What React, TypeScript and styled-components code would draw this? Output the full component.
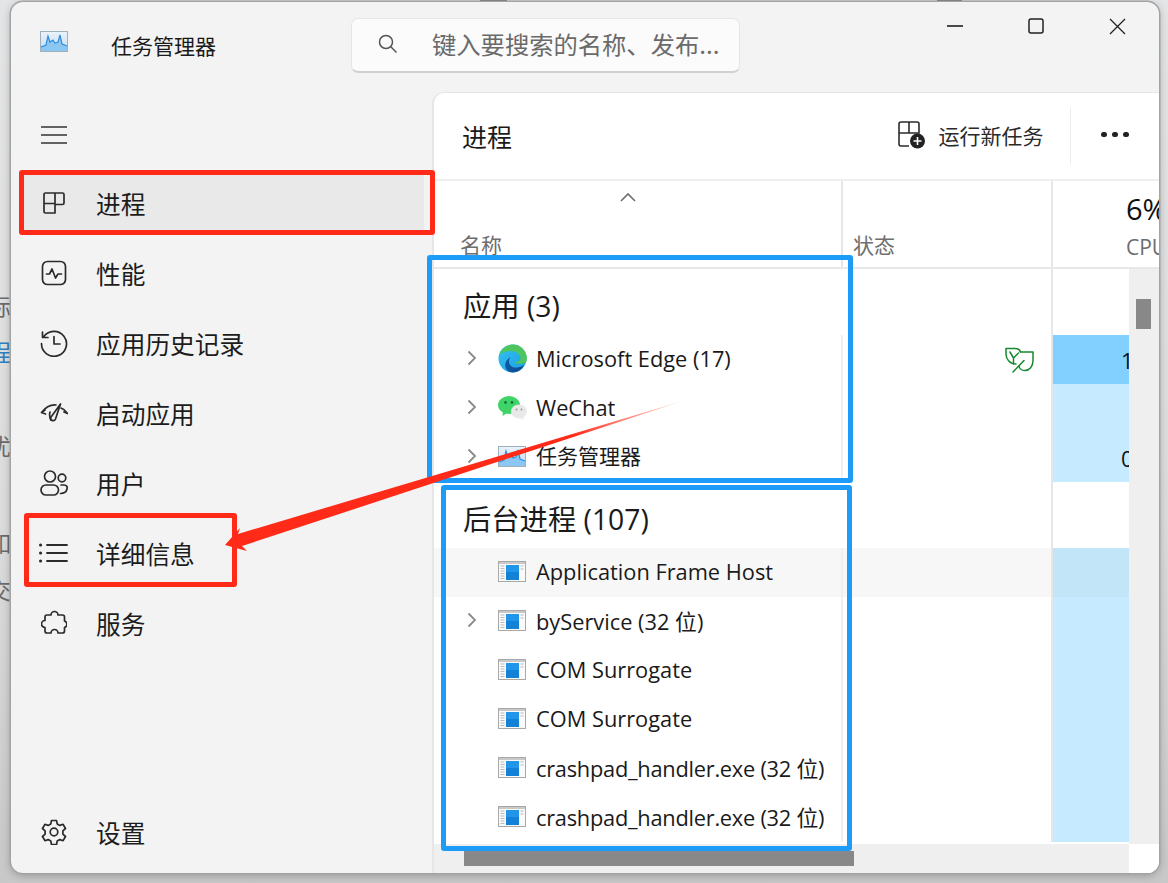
import React from "react";
import styled, { createGlobalStyle } from "styled-components";

const CJK = `"Noto Sans CJK SC", sans-serif`;
const LATIN = `"Open Sans", "Noto Sans CJK SC", sans-serif`;

const Global = createGlobalStyle`
  html, body { margin: 0; padding: 0; }
  body { width: 1168px; height: 883px; overflow: hidden; background: #d6d6d6; font-family: ${CJK}; }
  * { box-sizing: border-box; }
`;

const Desktop = styled.div`
  position: relative;
  width: 1168px;
  height: 883px;
  padding: 2px 9px 10px 11px;
  background: linear-gradient(#e4e5e6, #dcdcdc 60%, #c8c8c8);
  overflow: hidden;
`;

const BackText = styled.span<{ $top: number; $blue?: boolean }>`
  position: absolute;
  left: -12px;
  top: ${(p) => p.$top}px;
  font-size: 23px;
  line-height: 24px;
  color: ${(p) => (p.$blue ? "#2f7fc1" : "#6b6b6b")};
`;

const BackTab = styled.div<{ $x: number; $w: number }>`
  position: absolute;
  left: ${(p) => p.$x}px;
  top: 0;
  width: ${(p) => p.$w}px;
  height: 3px;
  background: #666;
`;

const Win = styled.div`
  position: relative;
  width: 1148px;
  height: 871px;
  display: flex;
  flex-direction: column;
  background: #f3f3f3;
  border-radius: 12px;
  box-shadow: 0 0 0 1.5px #a4a4a4, 0 2px 10px rgba(0, 0, 0, 0.28);
  overflow: hidden;
`;

const TitleBar = styled.div`
  height: 90px;
  flex: none;
  display: flex;
  align-items: flex-start;
`;

const AppIcon = styled.div`
  width: 100px;
  padding: 29px 0 0 29px;
  flex: none;
`;

const AppTitle = styled.div`
  width: 240px;
  flex: none;
  padding-top: 27px;
  font-size: 21px;
  line-height: 32px;
  color: #1a1a1a;
`;

const Search = styled.div`
  width: 389px;
  height: 55px;
  margin-top: 16px;
  flex: none;
  display: flex;
  align-items: center;
  padding: 0 0 3px 26px;
  gap: 34px;
  background: #fbfbfb;
  border: 1px solid #e6e6e6;
  border-bottom: 2px solid #d0d0d0;
  border-radius: 7px;
  font-size: 24.3px;
  color: #6a6a6a;
  white-space: nowrap;
`;

const WinButtons = styled.div`
  margin-left: auto;
  display: flex;
  align-items: center;
  height: 48px;
  padding-right: 33px;
  gap: 65px;
`;

const Body = styled.div`
  flex: 1;
  min-height: 0;
  display: flex;
`;

const Sidebar = styled.nav`
  width: 421px;
  flex: none;
  display: flex;
  flex-direction: column;
`;

const Burger = styled.div`
  height: 76px;
  flex: none;
  padding: 33px 0 0 30px;
`;

const NavItem = styled.div<{ $active?: boolean }>`
  height: 70px;
  flex: none;
  display: flex;
  align-items: center;
  margin: 0 8px 0 8px;
  padding-left: 20px;
  gap: 27px;
  font-size: 24.7px;
  color: #1c1c1c;
  background: ${(p) => (p.$active ? "#e9e9e9" : "transparent")};
  background-clip: padding-box;
  border-top: 5px solid transparent;
  border-bottom: 5px solid transparent;
`;

const NavIconBox = styled.span`
  width: 30px;
  height: 30px;
  flex: none;
  display: flex;
  align-items: center;
  justify-content: center;
`;

const Spacer = styled.div`
  flex: 1;
`;

const NavFoot = styled(NavItem)`
  margin-bottom: 6px;
`;

const Panel = styled.main`
  position: relative;
  flex: 1;
  min-width: 0;
  display: flex;
  flex-direction: column;
  background: #fff;
  border-top: 1px solid #e6e6e6;
  border-left: 2px solid #e6e6e6;
  border-top-left-radius: 12px;
  overflow: hidden;
`;

const Toolbar = styled.div`
  height: 88px;
  flex: none;
  display: flex;
  align-items: center;
  padding-left: 28px;
  border-bottom: 2.5px solid #efefef;
`;

const PageTitle = styled.div`
  font-size: 25px;
  color: #1a1a1a;
  flex: 1;
`;

const ToolAction = styled.div`
  display: flex;
  align-items: center;
  gap: 13px;
  font-size: 21px;
  color: #2a2a2a;
  padding: 0 26px 3px 0;
`;

const ToolDivider = styled.div`
  width: 1.5px;
  height: 56px;
  background: #ececec;
`;

const More = styled.div`
  width: 88px;
  flex: none;
  display: flex;
  justify-content: center;
  gap: 5.5px;
  padding-bottom: 3px;
`;

const Dot = styled.i`
  width: 5.5px;
  height: 5.5px;
  border-radius: 50%;
  background: #222;
`;

const Grid = styled.div`
  flex: 1;
  min-height: 0;
  display: flex;
  flex-direction: column;
`;

const HeadRow = styled.div`
  height: 88px;
  flex: none;
  display: grid;
  grid-template-columns: 409px 210px 1fr;
  border-bottom: 2px solid #e8e8e8;
`;

const HeadCell = styled.div<{ $right?: boolean }>`
  position: relative;
  display: flex;
  flex-direction: column;
  justify-content: flex-end;
  padding: 0 0 9px ${(p) => (p.$right ? "10px" : "26px")};
  font-size: 21px;
  line-height: 28px;
  color: #6e6e6e;
  border-right: 2px solid #e6e6e6;
  white-space: nowrap;
  overflow: hidden;
  &:last-child { border-right: none; padding-left: 73px; padding-bottom: 7px; }
`;

const SortCaret = styled.svg`
  position: absolute;
  left: 186px;
  top: 11px;
`;

const CpuPct = styled.span`
  font-family: ${LATIN};
  font-size: 29px;
  line-height: 36px;
  margin-bottom: 7px;
  color: #111;
`;

const CpuLabel = styled.span`
  font-family: ${LATIN};
  font-size: 21px;
  line-height: 26px;
  color: #6e6e6e;
`;

const ScrollArea = styled.div`
  flex: 1;
  min-height: 0;
  display: grid;
  grid-template-columns: 1fr 30px;
  grid-template-rows: 1fr 29px;
`;

const RowsClip = styled.div`
  overflow: hidden;
  min-width: 0;
`;

const GroupRow = styled.div`
  height: 66px;
  display: grid;
  grid-template-columns: 409px 210px 1fr;
`;

const GroupTitle = styled.div<{ $pad: number }>`
  padding: ${(p) => p.$pad}px 0 0 29px;
  font-family: ${LATIN};
  font-size: 28.3px;
  line-height: 36px;
  color: #1a1a1a;
  white-space: nowrap;
`;

const BlankCell = styled.div`
  border-right: 2px solid #e6e6e6;
  &:last-child { border-right: none; }
`;

const Row = styled.div<{ $hover?: boolean }>`
  height: 49px;
  display: grid;
  grid-template-columns: 409px 210px 1fr;
  background: ${(p) => (p.$hover ? "#f7f7f7" : "#fff")};
`;

const NameCell = styled.div<{ $tight?: boolean }>`
  display: flex;
  align-items: center;
  padding: 0 0 2px 33px;
  font-family: ${LATIN};
  font-size: 21.8px;
  letter-spacing: ${(p) => (p.$tight ? "-0.25px" : "0")};
  color: #1a1a1a;
  white-space: nowrap;
  border-right: 2px solid #f0f0f0;
`;

const CjkName = styled.span`
  font-family: ${CJK};
  font-size: 21px;
  line-height: 28px;
  padding-bottom: 4px;
`;

const Chevron = styled.span`
  width: 31px;
  flex: none;
  display: flex;
  align-items: center;
  padding-bottom: 2px;
`;

const ProcIconBox = styled.span`
  width: 38px;
  flex: none;
  display: flex;
  align-items: center;
`;

const StatusCell = styled.div`
  display: flex;
  align-items: center;
  justify-content: flex-end;
  padding-right: 17px;
  border-right: 2px solid #e6e6e6;
`;

const CpuCell = styled.div<{ $level: 0 | 1 | 2 | 3 }>`
  display: flex;
  align-items: center;
  padding-left: 68px;
  font-family: ${LATIN};
  font-size: 22px;
  color: #111;
  overflow: hidden;
  background: ${(p) =>
    p.$level === 2 ? "#81d0ff" : p.$level === 1 ? "#c6eaff" : p.$level === 3 ? "#c3e5f8" : "transparent"};
`;

const VTrack = styled.div`
  background: #efefef;
  padding: 30px 8px 0 7px;
`;

const VThumb = styled.div`
  height: 30px;
  background: #888;
`;

const HTrack = styled.div`
  background: #efefef;
  padding: 7px 0 0 30px;
`;

const HThumb = styled.div`
  width: 390px;
  height: 15px;
  background: #888;
`;

const Corner = styled.div`
  background: #fff;
`;

const Mark = styled.div<{ $c: string; $x: number; $y: number; $w: number; $h: number }>`
  position: absolute;
  left: ${(p) => p.$x}px;
  top: ${(p) => p.$y}px;
  width: ${(p) => p.$w}px;
  height: ${(p) => p.$h}px;
  border: 5px solid ${(p) => p.$c};
  border-radius: 3px;
  pointer-events: none;
`;

const ArrowLayer = styled.svg`
  position: absolute;
  left: 0;
  top: 0;
  pointer-events: none;
`;

const Ic = { fill: "none", stroke: "#2b2b2b", strokeWidth: 1.7, strokeLinecap: "round", strokeLinejoin: "round" } as const;

const TaskIcon = () => (
  <svg width="28" height="21" viewBox="0 0 28 21">
    <defs>
      <linearGradient id="tm" x1="0" y1="0" x2="0" y2="1">
        <stop offset="0" stopColor="#eaf3fb" />
        <stop offset="1" stopColor="#c3dcf0" />
      </linearGradient>
    </defs>
    <rect x="0.5" y="0.5" width="27" height="20" fill="url(#tm)" stroke="#9fb0bd" />
    <path d="M1 16 L6 14 L8 5 L10 11 L13 9 L15 12 L18 11 L20 4 L22 13 L27 15 L27 20 L1 20 Z" fill="#8cc6f2" />
    <path d="M1 16 L6 14 L8 5 L10 11 L13 9 L15 12 L18 11 L20 4 L22 13 L27 15" fill="none" stroke="#2f8fdc" strokeWidth="1.2" />
  </svg>
);

const ProcIcon = () => (
  <svg width="28" height="21" viewBox="0 0 28 21">
    <rect x="0.5" y="0.5" width="27" height="20" fill="#fafafa" stroke="#a8a8a8" />
    <rect x="1" y="1" width="26" height="2" fill="#c9c9c9" />
    <path d="M2.5 5h4M2.5 7.5h4M2.5 10h4M2.5 12.5h4M2.5 15h4M2.5 17.5h4M22.5 5h3M22.5 8h3" stroke="#b9b9b9" strokeWidth="1" />
    <rect x="8" y="4" width="13" height="15" fill="#1281d6" />
    <rect x="8" y="4" width="13" height="7" fill="#2196e8" />
  </svg>
);

const EdgeIcon = () => (
  <svg width="29" height="29" viewBox="0 0 29 29">
    <defs>
      <linearGradient id="e1" x1="0" y1="0" x2="1" y2="1">
        <stop offset="0" stopColor="#35c1f1" />
        <stop offset="1" stopColor="#1b9de2" />
      </linearGradient>
      <linearGradient id="e2" x1="0" y1="0" x2="1" y2="0">
        <stop offset="0" stopColor="#0c59a4" />
        <stop offset="1" stopColor="#114a8b" />
      </linearGradient>
    </defs>
    <circle cx="14.5" cy="14.5" r="14" fill="url(#e1)" />
    <path d="M15 .6a14 14 0 0 1 13.900 14.600c0 3.400-3.400 4.800-6.400 4.800-3 0-5.400-.9-6.400-1.900 4.400.1 6.400-1.500 6.400-3.900C22.500 9.500 16.500 7 13 7 9 7 3.500 8.500 1.200 11 3 5 8.500.6 15 .6Z" fill="#4ec55f" />
    <path d="M26 21c-2 4.800-6.900 7.500-11.500 7.500-3 0-5.200-1.400-6.500-4-2-4 0-9.600 4.500-11-1.500 1.700-2 3.600-1.200 6 1.100 3.100 4.400 4.300 7.500 4.100 2.800-.2 5.300-1.100 7.200-2.600Z" fill="url(#e2)" />
  </svg>
);

const WeChatIcon = () => (
  <svg width="29" height="24" viewBox="0 0 29 24">
    <ellipse cx="11" cy="9" rx="11" ry="9" fill="#3fd467" />
    <path d="M5 15 L4.5 20 L10 16.5 Z" fill="#3fd467" />
    <circle cx="7.5" cy="6.5" r="1.4" fill="#14783a" />
    <circle cx="14" cy="6.5" r="1.4" fill="#14783a" />
    <ellipse cx="21" cy="15.5" rx="8" ry="7" fill="#e9e9e9" />
    <path d="M24 20 L26 24 L21 21.5 Z" fill="#e9e9e9" />
    <circle cx="18.5" cy="13.5" r="1" fill="#9b9b9b" />
    <circle cx="23.5" cy="13.5" r="1" fill="#9b9b9b" />
  </svg>
);

const Chev = () => (
  <svg width="10" height="16" viewBox="0 0 10 16">
    <path d="M1.500 1.500 L8 8 L1.500 14.500" fill="none" stroke="#8a8a8a" strokeWidth="1.800" />
  </svg>
);

const Leaf = () => (
  <svg width="29" height="26" viewBox="0 0 29 26" fill="none" stroke="#17882f" strokeWidth="1.500" strokeLinecap="round" strokeLinejoin="round">
    <path d="M11 17C5 17 1 12.500 1 7V1.500h9c3 0 5 1.500 5.500 3.500" />
    <path d="M15.500 5H28v8.500c0 6-3.500 10-8 10-3 0-5.500-1.500-6-4.500" />
    <path d="M5 5l3.500 6 5-5M8.500 11v6" />
    <path d="M8 25 19 13.500" />
  </svg>
);

const navIcons: Record<string, React.ReactNode> = {
  proc: (
    <svg width="24" height="24" viewBox="0 0 24 24" {...Ic}>
      <path d="M2 3.500A1.500 1.500 0 0 1 3.500 2h17A1.500 1.500 0 0 1 22 3.500V12a1.500 1.500 0 0 1-1.500 1.500H13V22H3.500A1.500 1.500 0 0 1 2 20.500ZM13 2v11.500M2 12.500h11" />
    </svg>
  ),
  perf: (
    <svg width="26" height="26" viewBox="0 0 26 26" {...Ic}>
      <rect x="1.500" y="1.500" width="23" height="23" rx="5" />
      <path d="M5.500 14h3l2.500-5 3.500 9 2.500-4h3.500" />
    </svg>
  ),
  hist: (
    <svg width="28" height="28" viewBox="0 0 28 28" {...Ic}>
      <path d="M3.500 8A12.500 12.500 0 1 1 1.500 14.500M2.500 3v5.500H8M14 7.500v7.500h6" />
    </svg>
  ),
  start: (
    <svg width="28" height="22" viewBox="0 0 28 22" {...Ic}>
      <path d="M1.500 10.500C5 6 10 2.500 16 3M1.500 10.500 5 8M1.500 10.500l4 1.500" />
      <path d="M20.500 2 15.500 17a2.600 2.600 0 0 1-5-1.200Z" />
      <path d="M11 18c-1.500-3-2-5-1-8M21 6c3 1 5 3 6.500 5.500M27.500 11.500 24 10" />
    </svg>
  ),
  user: (
    <svg width="28" height="26" viewBox="0 0 28 26" {...Ic}>
      <circle cx="10" cy="6.500" r="5.500" />
      <circle cx="22" cy="8" r="3.800" />
      <rect x="1" y="15" width="17.500" height="10" rx="5" />
      <path d="M21 15h3c3 0 3.500 2 3 4-.7 3-3.500 4.500-6.500 4.500" />
    </svg>
  ),
  list: (
    <svg width="30" height="20" viewBox="0 0 30 20" fill="none" stroke="#2b2b2b" strokeWidth="1.800" strokeLinecap="round">
      <path d="M8 2h20M8 10h20M8 18h20" />
      <path d="M1.500 2h.1M1.500 10h.1M1.500 18h.1" strokeWidth="3" />
    </svg>
  ),
  svc: (
    <svg width="26" height="28" viewBox="0 0 26 28" {...Ic}>
      <path d="M10 6a3.500 3.500 0 1 1 7 0h4.500a2 2 0 0 1 2 2v4a3.400 3.400 0 0 1 0 6.500v3.500a2 2 0 0 1-2 2H17a3.500 3.500 0 0 0-7 0H6a2 2 0 0 1-2-2v-3.500a3.500 3.500 0 0 1 0-7V8a2 2 0 0 1 2-2h4Z" />
    </svg>
  ),
  gear: (
    <svg width="26" height="26" viewBox="0 0 26 26" {...Ic}>
      <circle cx="13" cy="13" r="3.800" />
      <path d="M10.500 1.500h5l.7 3.400 2.600 1.500 3.300-1.100 2.400 4.200-2.600 2.300v3.400l2.600 2.300-2.400 4.200-3.300-1.100-2.600 1.500-.7 3.400h-5l-.7-3.400-2.600-1.500-3.300 1.100-2.400-4.200 2.600-2.300v-3.400L1.500 9.500l2.400-4.200 3.300 1.100 2.600-1.500Z" />
    </svg>
  ),
};

const nav: [string, string][] = [
  ["proc", "进程"],
  ["perf", "性能"],
  ["hist", "应用历史记录"],
  ["start", "启动应用"],
  ["user", "用户"],
  ["list", "详细信息"],
  ["svc", "服务"],
];

const bgRows: [string, boolean, boolean, boolean][] = [
  ["Application Frame Host", false, true, false],
  ["byService (32 位)", true, false, false],
  ["COM Surrogate", false, false, false],
  ["COM Surrogate", false, false, false],
  ["crashpad_handler.exe (32 位)", false, false, true],
  ["crashpad_handler.exe (32 位)", false, false, true],
];

export default function App() {
  return (
    <Desktop>
      <Global />
      <BackTab $x={480} $w={27} />
      <BackTab $x={937} $w={25} />
      <BackText $top={293}>标</BackText>
      <BackText $top={339} $blue>程</BackText>
      <BackText $top={433}>优</BackText>
      <BackText $top={530}>如</BackText>
      <BackText $top={577}>交</BackText>
      <Win>
        <TitleBar>
          <AppIcon><TaskIcon /></AppIcon>
          <AppTitle>任务管理器</AppTitle>
          <Search>
            <svg width="20" height="20" viewBox="0 0 20 20" fill="none" stroke="#555" strokeWidth="1.500">
              <circle cx="8" cy="8" r="6.500" />
              <path d="M12.800 12.800 18.500 18.500" />
            </svg>
            键入要搜索的名称、发布...
          </Search>
          <WinButtons>
            <svg width="16" height="2" viewBox="0 0 16 2"><path d="M0 1h16" stroke="#111" strokeWidth="1.500" /></svg>
            <svg width="16" height="16" viewBox="0 0 16 16" fill="none" stroke="#222" strokeWidth="1.500"><rect x="1" y="1" width="14" height="14" rx="2" /></svg>
            <svg width="17" height="17" viewBox="0 0 17 17" fill="none" stroke="#222" strokeWidth="1.300"><path d="M1 1 16 16M16 1 1 16" /></svg>
          </WinButtons>
        </TitleBar>
        <Body>
          <Sidebar>
            <Burger>
              <svg width="26" height="18" viewBox="0 0 26 18" fill="none" stroke="#333" strokeWidth="1.600"><path d="M0 1h26M0 9h26M0 17h26" /></svg>
            </Burger>
            {nav.map(([k, t], i) => (
              <NavItem key={k} $active={i === 0}>
                <NavIconBox>{navIcons[k]}</NavIconBox>
                {t}
              </NavItem>
            ))}
            <Spacer />
            <NavFoot>
              <NavIconBox>{navIcons.gear}</NavIconBox>
              设置
            </NavFoot>
          </Sidebar>
          <Panel>
            <Toolbar>
              <PageTitle>进程</PageTitle>
              <ToolAction>
                <svg width="28" height="28" viewBox="0 0 28 28" fill="none" stroke="#2b2b2b" strokeWidth="1.600">
                  <path d="M11 25H3a2 2 0 0 1-2-2V3a2 2 0 0 1 2-2h16a2 2 0 0 1 2 2v9H1M11 1v11" />
                  <circle cx="19.500" cy="20" r="7.500" fill="#222" stroke="none" />
                  <path d="M19.500 16v8M15.500 20h8" stroke="#fff" />
                </svg>
                运行新任务
              </ToolAction>
              <ToolDivider />
              <More><Dot /><Dot /><Dot /></More>
            </Toolbar>
            <Grid>
              <HeadRow>
                <HeadCell>
                  <SortCaret width="16" height="10" viewBox="0 0 16 10"><path d="M1 9 8 2l7 7" fill="none" stroke="#6f6f6f" strokeWidth="1.600" /></SortCaret>
                  名称
                </HeadCell>
                <HeadCell $right>状态</HeadCell>
                <HeadCell>
                  <CpuPct>6%</CpuPct>
                  <CpuLabel>CPU</CpuLabel>
                </HeadCell>
              </HeadRow>
              <ScrollArea>
                <RowsClip>
                  <GroupRow>
                    <GroupTitle $pad={19}>应用 (3)</GroupTitle>
                    <BlankCell />
                    <BlankCell />
                  </GroupRow>
                  <Row>
                    <NameCell><Chevron><Chev /></Chevron><ProcIconBox><EdgeIcon /></ProcIconBox>Microsoft Edge (17)</NameCell>
                    <StatusCell><Leaf /></StatusCell>
                    <CpuCell $level={2}>1</CpuCell>
                  </Row>
                  <Row>
                    <NameCell><Chevron><Chev /></Chevron><ProcIconBox><WeChatIcon /></ProcIconBox>WeChat</NameCell>
                    <StatusCell />
                    <CpuCell $level={1} />
                  </Row>
                  <Row>
                    <NameCell><Chevron><Chev /></Chevron><ProcIconBox><TaskIcon /></ProcIconBox><CjkName>任务管理器</CjkName></NameCell>
                    <StatusCell />
                    <CpuCell $level={1}>0</CpuCell>
                  </Row>
                  <GroupRow>
                    <GroupTitle $pad={19}>后台进程 (107)</GroupTitle>
                    <BlankCell />
                    <BlankCell />
                  </GroupRow>
                  {bgRows.map(([t, c, h, tight], i) => (
                    <Row key={i} $hover={h}>
                      <NameCell $tight={tight}>
                        <Chevron>{c && <Chev />}</Chevron>
                        <ProcIconBox><ProcIcon /></ProcIconBox>
                        {t}
                      </NameCell>
                      <StatusCell />
                      <CpuCell $level={h ? 3 : 1} />
                    </Row>
                  ))}
                </RowsClip>
                <VTrack><VThumb /></VTrack>
                <HTrack><HThumb /></HTrack>
                <Corner />
              </ScrollArea>
            </Grid>
          </Panel>
        </Body>
      </Win>
      <Mark $c="#ff2a17" $x={19} $y={170} $w={416} $h={65} />
      <Mark $c="#ff2a17" $x={24} $y={513} $w={213} $h={74} />
      <Mark $c="#1d9bf8" $x={427} $y={255} $w={426} $h={228} />
      <Mark $c="#1d9bf8" $x={441} $y={485} $w={411} $h={366} />
      <ArrowLayer width="1168" height="883" viewBox="0 0 1168 883">
        <defs>
          <linearGradient id="ar" gradientUnits="userSpaceOnUse" x1="686" y1="400" x2="225" y2="545">
            <stop offset="0" stopColor="#ff2a17" stopOpacity="0.1" />
            <stop offset="0.25" stopColor="#ff2a17" />
            <stop offset="1" stopColor="#ff2a17" />
          </linearGradient>
        </defs>
        <path d="M686 400 L238 534 L240 528 L225 545 L247 551 L242 546 Z" fill="url(#ar)" />
      </ArrowLayer>
    </Desktop>
  );
}
